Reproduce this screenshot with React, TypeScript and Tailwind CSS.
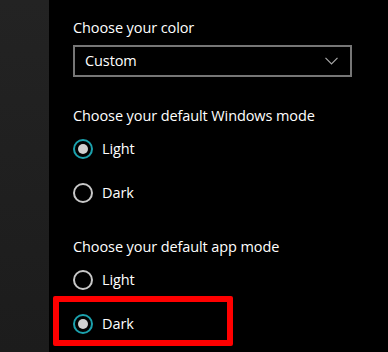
import React from "react";

function Radio({ label, checked }: { label: string; checked?: boolean }) {
  return (
    <div className="flex items-center h-[20px]">
      <div
        className={
          checked
            ? "w-[20px] h-[20px] rounded-full border-2 border-[#1ba1ad] flex items-center justify-center"
            : "w-[20px] h-[20px] rounded-full border-2 border-[#c8c8c8]"
        }
      >
        {checked ? <div className="w-[10px] h-[10px] rounded-full bg-[#d0d0d0]" /> : null}
      </div>
      <span className="ml-[9px] text-[14.5px] tracking-[-0.1px] leading-[20px] text-white">{label}</span>
    </div>
  );
}

export default function App() {
  return (
    <div
      className="relative w-[388px] h-[352px] flex overflow-hidden bg-black"
      style={{ fontFamily: '"Open Sans", "Noto Sans", sans-serif' }}
    >
      <div className="w-[49px] h-full bg-gradient-to-b from-[#232323] to-[#1c1c1c]" />
      <div className="flex-1 pl-[24px] pt-[18px] flex flex-col">
        <div className="text-[14.5px] tracking-[-0.1px] leading-[20px] text-white">Choose your color</div>
        <div className="mt-[7px] w-[279px] h-[32px] border-2 border-[#767676] flex items-center justify-between pl-[10px] pr-[12px]">
          <span className="text-[14.5px] tracking-[-0.1px] leading-[20px] text-white">Custom</span>
          <svg width="13" height="8" viewBox="0 0 13 8" fill="none">
            <path d="M0.5 0.8 L6.5 6.8 L12.5 0.8" stroke="#a8a8a8" strokeWidth="1.2" />
          </svg>
        </div>
        <div className="mt-[29px] text-[14.5px] tracking-[-0.1px] leading-[20px] text-white">Choose your default Windows mode</div>
        <div className="mt-[13px]">
          <Radio label="Light" checked />
        </div>
        <div className="mt-[24px]">
          <Radio label="Dark" />
        </div>
        <div className="mt-[34px] text-[14.5px] tracking-[-0.1px] leading-[20px] text-white">Choose your default app mode</div>
        <div className="mt-[13px]">
          <Radio label="Light" />
        </div>
        <div className="mt-[24px]">
          <Radio label="Dark" checked />
        </div>
      </div>
      <div className="absolute left-[53px] top-[296px] w-[180px] h-[50px] border-[6px] border-[#ff0000] rounded-[2px]" />
    </div>
  );
}
